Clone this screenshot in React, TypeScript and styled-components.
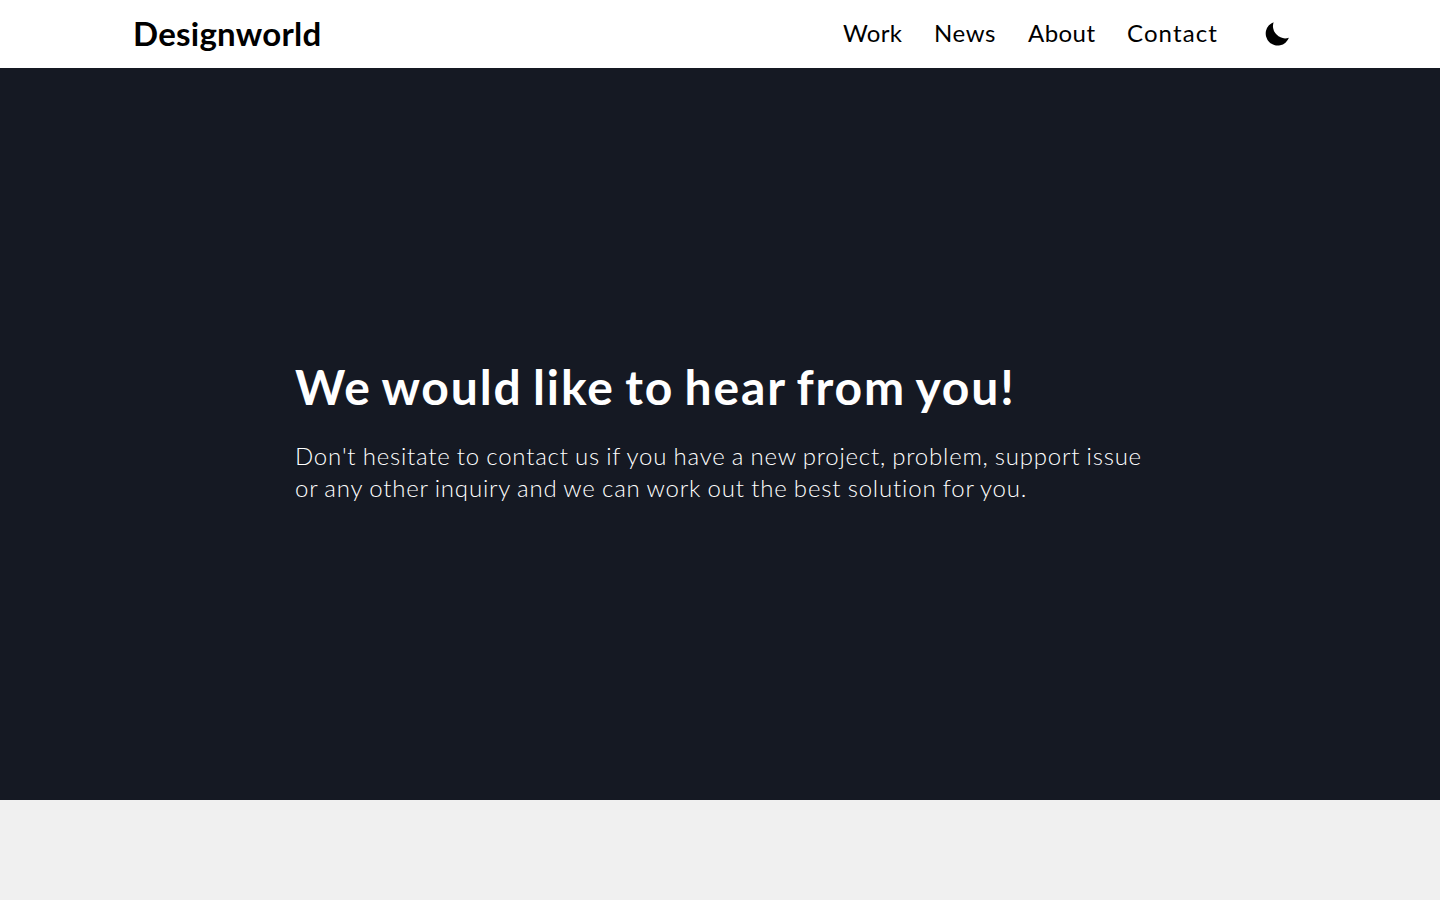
import React from "react";
import styled, { createGlobalStyle } from "styled-components";

const GlobalStyle = createGlobalStyle`
  * { box-sizing: border-box; }
  body { margin: 0; background: #f0f0f0; font-family: Lato, "Open Sans", sans-serif; }
`;
const Header = styled.header`
  height: 68px;
  padding: 0 150px 0 133px;
  display: flex;
  align-items: center;
  justify-content: space-between;
  background: #fff;
  color: #000;
`;
const Logo = styled.a`
  padding-bottom: 2px;
  font-size: 33px;
  line-height: 66px;
  font-weight: 700;
  letter-spacing: 0.25px;
  white-space: nowrap;
`;
const Nav = styled.nav`
  display: flex;
  align-items: center;
`;
const NavLink = styled.a<{ $width: number; $spacing: number }>`
  width: ${(p) => p.$width}px;
  margin-right: 32px;
  padding-bottom: 2px;
  font-size: 24px;
  line-height: 32px;
  letter-spacing: ${(p) => p.$spacing}px;
  white-space: nowrap;
`;
const ThemeButton = styled.button`
  display: flex;
  margin-left: 14px;
  padding: 0;
  border: 0;
  background: none;
  color: #000;
`;
const Hero = styled.main`
  height: 732px;
  padding: 0 0 10px 295px;
  display: flex;
  flex-direction: column;
  justify-content: center;
  background: #151923;
  color: #fff;
`;
const Title = styled.h1`
  margin: 0 0 21px;
  font-size: 48px;
  line-height: 64px;
  font-weight: 700;
  letter-spacing: 1.85px;
  word-spacing: -3px;
  white-space: nowrap;
`;
const Lead = styled.p`
  margin: 0;
  font-size: 24px;
  line-height: 32px;
  font-weight: 300;
`;
const Line = styled.span<{ $spacing: number }>`
  display: block;
  letter-spacing: ${(p) => p.$spacing}px;
  word-spacing: -1px;
  white-space: nowrap;
`;
const links = [
  { label: "Work", width: 59, spacing: 0.3 },
  { label: "News", width: 62, spacing: 0.6 },
  { label: "About", width: 67, spacing: 0.45 },
  { label: "Contact", width: 91, spacing: 1.1 },
];

export default function App() {
  return (
    <>
      <GlobalStyle />
      <Header>
        <Logo>Designworld</Logo>
        <Nav>
          {links.map((l) => (
            <NavLink key={l.label} $width={l.width} $spacing={l.spacing}>{l.label}</NavLink>
          ))}
          <ThemeButton aria-label="Toggle theme">
            <svg width="26" height="26" viewBox="0 0 26 26">
              <path d="M9.6 1.2A12 12 0 1 0 24.9 16.8A12.4 12.4 0 0 1 9.6 1.2Z" fill="currentColor" />
            </svg>
          </ThemeButton>
        </Nav>
      </Header>
      <Hero>
        <Title>We would like to hear from you!</Title>
        <Lead>
          <Line $spacing={0.78}>Don't hesitate to contact us if you have a new project, problem, support issue</Line>
          <Line $spacing={0.82}>or any other inquiry and we can work out the best solution for you.</Line>
        </Lead>
      </Hero>
    </>
  );
}
